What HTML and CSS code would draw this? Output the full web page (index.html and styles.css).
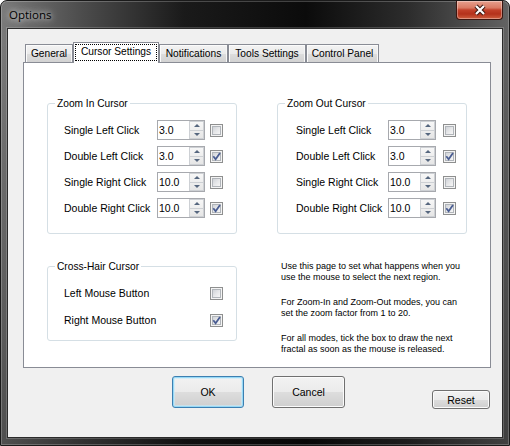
FILE: index.html
```html
<!DOCTYPE html>
<html>
<head>
<meta charset="utf-8">
<title>Options</title>
<link rel="stylesheet" href="styles.css">
</head>
<body>
<div class="window">
  <div class="titlebar">
    <span class="title">Options</span>
    <div class="close">
      <svg width="14" height="12" viewBox="0 0 14 12"><path d="M3 2 L11 10 M11 2 L3 10" stroke="#3a1812" stroke-width="4.2" fill="none"/><path d="M3 2 L11 10 M11 2 L3 10" stroke="#ffffff" stroke-width="2.2" fill="none"/></svg>
    </div>
  </div>
  <div class="client">
    <div class="tabctl">
      <div class="tabstrip">
        <div class="tab t1">General</div>
        <div class="tab t2 active"><span class="focus">Cursor Settings</span></div>
        <div class="tab t3">Notifications</div>
        <div class="tab t4">Tools Settings</div>
        <div class="tab t5">Control Panel</div>
      </div>
      <div class="panel">
        <div class="grouprow">
          <div class="group zoom">
            <span class="gtitle">Zoom In Cursor</span>
            <div class="rows">
              <div class="row"><span class="lbl">Single Left Click</span><div class="spin"><span class="val">3.0</span><span class="arr"><i class="up"><b></b></i><i class="dn"><b></b></i></span></div><span class="cb"><b></b></span></div>
              <div class="row"><span class="lbl">Double Left Click</span><div class="spin"><span class="val">3.0</span><span class="arr"><i class="up"><b></b></i><i class="dn"><b></b></i></span></div><span class="cb"><b><svg width="9" height="9" viewBox="0 0 9 9"><path d="M1.3 4.3 L3.6 7.2 L8 1" stroke="#4a5d92" stroke-width="1.8" fill="none"/></svg></b></span></div>
              <div class="row"><span class="lbl">Single Right Click</span><div class="spin"><span class="val">10.0</span><span class="arr"><i class="up"><b></b></i><i class="dn"><b></b></i></span></div><span class="cb"><b></b></span></div>
              <div class="row"><span class="lbl">Double Right Click</span><div class="spin"><span class="val">10.0</span><span class="arr"><i class="up"><b></b></i><i class="dn"><b></b></i></span></div><span class="cb"><b><svg width="9" height="9" viewBox="0 0 9 9"><path d="M1.3 4.3 L3.6 7.2 L8 1" stroke="#4a5d92" stroke-width="1.8" fill="none"/></svg></b></span></div>
            </div>
          </div>
          <div class="group zoom out">
            <span class="gtitle">Zoom Out Cursor</span>
            <div class="rows">
              <div class="row"><span class="lbl">Single Left Click</span><div class="spin"><span class="val">3.0</span><span class="arr"><i class="up"><b></b></i><i class="dn"><b></b></i></span></div><span class="cb"><b></b></span></div>
              <div class="row"><span class="lbl">Double Left Click</span><div class="spin"><span class="val">3.0</span><span class="arr"><i class="up"><b></b></i><i class="dn"><b></b></i></span></div><span class="cb"><b><svg width="9" height="9" viewBox="0 0 9 9"><path d="M1.3 4.3 L3.6 7.2 L8 1" stroke="#4a5d92" stroke-width="1.8" fill="none"/></svg></b></span></div>
              <div class="row"><span class="lbl">Single Right Click</span><div class="spin"><span class="val">10.0</span><span class="arr"><i class="up"><b></b></i><i class="dn"><b></b></i></span></div><span class="cb"><b></b></span></div>
              <div class="row"><span class="lbl">Double Right Click</span><div class="spin"><span class="val">10.0</span><span class="arr"><i class="up"><b></b></i><i class="dn"><b></b></i></span></div><span class="cb"><b><svg width="9" height="9" viewBox="0 0 9 9"><path d="M1.3 4.3 L3.6 7.2 L8 1" stroke="#4a5d92" stroke-width="1.8" fill="none"/></svg></b></span></div>
            </div>
          </div>
        </div>
        <div class="grouprow second">
          <div class="group cross">
            <span class="gtitle">Cross-Hair Cursor</span>
            <div class="rows">
              <div class="row"><span class="lbl">Left Mouse Button</span><span class="cb"><b></b></span></div>
              <div class="row"><span class="lbl">Right Mouse Button</span><span class="cb"><b><svg width="9" height="9" viewBox="0 0 9 9"><path d="M1.3 4.3 L3.6 7.2 L8 1" stroke="#4a5d92" stroke-width="1.8" fill="none"/></svg></b></span></div>
            </div>
          </div>
          <div class="help">
            <p>Use this page to set what happens when you<br>use the mouse to select the next region.</p>
            <p>For Zoom-In and Zoom-Out modes, you can<br>set the zoom factor from 1 to 20.</p>
            <p>For all modes, tick the box to draw the next<br>fractal as soon as the mouse is released.</p>
          </div>
        </div>
      </div>
    </div>
    <div class="buttons">
      <div class="btn ok">OK</div>
      <div class="btn cancel">Cancel</div>
      <div class="btn reset">Reset</div>
    </div>
  </div>
</div>
</body>
</html>
```
FILE: styles.css
```css
html, body {
  margin: 0;
  padding: 0;
  background: #ffffff;
}
body {
  font-family: "Liberation Sans", Arial, sans-serif;
  color: #000;
}
.window {
  width: 510px;
  height: 446px;
  box-sizing: border-box;
  border: 1px solid #1a1a1a;
  border-radius: 7px 7px 0 0;
  overflow: hidden;
  background:
    linear-gradient(180deg, rgba(0,0,0,0) 0, rgba(0,0,0,0) 40px, rgba(0,0,0,0.35) 100%),
    linear-gradient(90deg, #7a7a7a 0%, #4c4c4c 16%, #1a1a1a 36%, #0b0b0b 60%, #2c2c2c 80%, #636363 100%);
  box-shadow: inset 0 0 0 1px rgba(255,255,255,0.22);
}
.titlebar {
  height: 27px;
  display: flex;
  align-items: flex-start;
}
.title {
  font-family: "Open Sans", "Noto Sans", sans-serif;
  font-size: 11.5px;
  line-height: 16px;
  padding: 6px 0 0 8px;
  color: #000;
  text-shadow: 0 0 5px rgba(255,255,255,0.7), 0 0 9px rgba(255,255,255,0.55), 0 0 14px rgba(255,255,255,0.4);
}
.close {
  margin-left: auto;
  margin-right: 6px;
  width: 47px;
  height: 19px;
  box-sizing: border-box;
  border: 1px solid #3c1610;
  border-top: none;
  border-radius: 0 0 4px 4px;
  background: linear-gradient(180deg, #e6a08e 0%, #d97a63 38%, #c2412a 50%, #b4311b 72%, #cf5f3f 100%);
  box-shadow: inset 0 0 0 1px rgba(255,255,255,0.35);
  display: flex;
  align-items: center;
  justify-content: center;
}
.client {
  margin: 0 6px;
  height: 410px;
  box-sizing: border-box;
  border: 1px solid #2b2b2b;
  background: #f0f0f0;
  box-shadow: 0 0 0 1px rgba(255,255,255,0.18);
}
.tabctl {
  margin: 13px 0 0 15px;
  width: 468px;
}
.tabstrip {
  display: flex;
  align-items: flex-end;
  height: 20px;
  padding-left: 2px;
}
.tab {
  box-sizing: border-box;
  height: 18px;
  border: 1px solid #898c95;
  border-bottom: none;
  background: linear-gradient(180deg, #f3f3f3 0%, #ebebeb 50%, #dedede 51%, #d2d2d2 100%);
  box-shadow: inset 1px 1px 0 #fbfbfb, inset -1px 0 0 #f7f7f7;
  font-size: 10.2px;
  line-height: 17px;
  text-align: center;
  white-space: nowrap;
}
.t1 { width: 48px; }
.t2 { width: 86px; }
.t3 { width: 69px; }
.t4 { width: 78px; }
.t5 { width: 73px; }
.tab.active {
  height: 21px;
  margin-bottom: -1px;
  position: relative;
  z-index: 1;
  background: #ffffff;
  box-shadow: none;
  padding-top: 1px;
}
.focus {
  display: block;
  box-sizing: border-box;
  height: 17px;
  margin: 0 1px;
  border: 1px dotted #000;
  line-height: 14px;
}
.panel {
  box-sizing: border-box;
  height: 306px;
  border: 1px solid #898c95;
  background: #ffffff;
  padding: 40px 0 0 23px;
}
.grouprow {
  display: flex;
  align-items: flex-start;
  gap: 40px;
}
.grouprow.second {
  margin-top: 32px;
  gap: 44px;
}
.group {
  box-sizing: border-box;
  width: 190px;
  border: 1px solid #d5dfe5;
  border-radius: 3px;
}
.group.zoom { height: 131px; }
.group.cross { height: 75px; }
.gtitle {
  display: block;
  width: fit-content;
  margin: -7px 0 0 7px;
  padding: 0 2px;
  background: #fff;
  font-size: 10.2px;
  line-height: 13px;
  white-space: nowrap;
}
.rows {
  display: flex;
  flex-direction: column;
  gap: 6px;
  padding: 10px 0 0 16px;
}
.group.out .rows { padding-left: 18px; }
.group.cross .rows { gap: 7px; }
.row {
  display: flex;
  align-items: center;
  height: 20px;
  font-size: 10.5px;
}
.lbl {
  width: 93px;
  white-space: nowrap;
}
.group.out .lbl { width: 92px; }
.group.cross .lbl { width: 146px; }
.spin {
  display: flex;
  box-sizing: border-box;
  width: 48px;
  height: 20px;
  margin-right: 5px;
  border: 1px solid #a7a9ae;
  background: #fff;
}
.group.out .spin { margin-right: 7px; }
.val {
  flex: 1;
  padding-left: 1px;
  line-height: 18px;
  font-size: 10.5px;
}
.arr {
  width: 15px;
  display: flex;
  flex-direction: column;
  box-sizing: border-box;
  border: 1px solid #cdd0d4;
  background: linear-gradient(180deg, #f7f7f7, #e6e6e6);
}
.arr i {
  flex: 1;
  display: flex;
  align-items: center;
  justify-content: center;
}
.arr i.up { border-bottom: 1px solid #cdd0d4; }
.arr i b {
  width: 0;
  height: 0;
  border-left: 3px solid transparent;
  border-right: 3px solid transparent;
}
.arr i.up b { border-bottom: 3px solid #56677f; }
.arr i.dn b { border-top: 3px solid #56677f; }
.cb {
  display: block;
  box-sizing: border-box;
  width: 13px;
  height: 13px;
  border: 1px solid #8e8f8f;
  background: #f4f4f4;
  padding: 1px;
}
.cb b {
  display: block;
  box-sizing: border-box;
  width: 9px;
  height: 9px;
  border: 1px solid #b1b5ba;
  background: linear-gradient(135deg, #d0d3d8 0%, #e6e7e9 50%, #f6f6f6 100%);
  position: relative;
}
.cb svg {
  position: absolute;
  left: -1px;
  top: -1px;
}
.help {
  margin-top: -5px;
  font-size: 9px;
  line-height: 11px;
  white-space: nowrap;
}
.help p {
  margin: 0 0 14px;
}
.buttons {
  display: flex;
  align-items: flex-start;
  margin-top: 8px;
  padding-left: 164px;
}
.btn {
  box-sizing: border-box;
  border: 1px solid #707070;
  border-radius: 3px;
  background: linear-gradient(180deg, #f2f2f2 0%, #ebebeb 50%, #dddddd 51%, #cfcfcf 100%);
  box-shadow: inset 0 0 0 1px #fbfbfb;
  display: flex;
  align-items: center;
  justify-content: center;
  font-size: 10.5px;
}
.ok {
  width: 72px;
  height: 32px;
  border-color: #3c7fb1;
  box-shadow: inset 0 0 0 1px #97d9f6, inset 0 0 0 2px rgba(200,235,250,0.6);
}
.cancel {
  width: 73px;
  height: 32px;
  margin-left: 28px;
}
.reset {
  width: 58px;
  height: 19px;
  margin-left: 87px;
  margin-top: 14px;
}
```
